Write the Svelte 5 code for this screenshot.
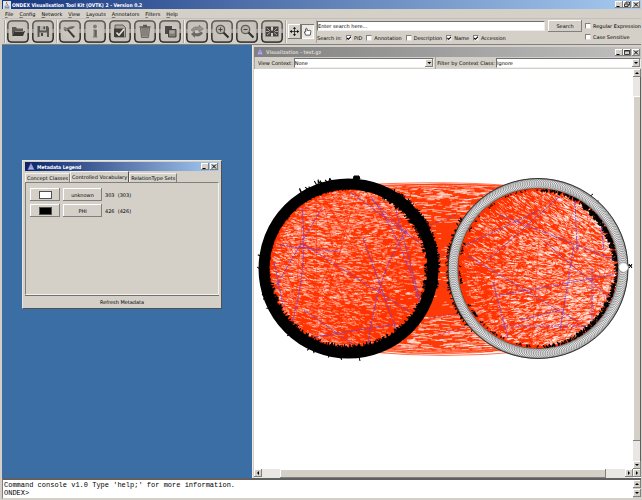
<script>
  const menus = ['File', 'Config', 'Network', 'View', 'Layouts', 'Annotators', 'Filters', 'Help'];
  const toolGroups = [
    ['Open', 'Save'],
    ['Tools', 'Info', 'Check', 'Delete', 'Copy'],
    ['Refresh', 'Zoom in', 'Zoom out', 'Fit']
  ];
  const fields = [
    { label: 'PID', on: true },
    { label: 'Annotation', on: false },
    { label: 'Description', on: false },
    { label: 'Name', on: true },
    { label: 'Accession', on: true }
  ];
  const tabs = ['Concept Classes', 'Controlled Vocabulary', 'RelationType Sets'];
  const vocabulary = [
    { name: 'unknown', count: '303  (303)', color: '#fff' },
    { name: 'PHI', count: '426  (426)', color: '#000' }
  ];

  // Small seeded generator, so the network looks the same on every load.
  let seed = 20071;
  const rnd = () => {
    seed = (seed * 16807) % 2147483647;
    return seed / 2147483647;
  };
  const f = (n) => n.toFixed(1);
  const A = { x: 348.5, y: 268.5 };
  const B = { x: 538, y: 268.5 };
  const polar = (c, r, deg) => [c.x + r * Math.cos((deg * Math.PI) / 180), c.y + r * Math.sin((deg * Math.PI) / 180)];

  function streaks(c, n, tilt, density) {
    let d = '';
    for (let i = 0; i < n; i++) {
      const r = 78 * Math.sqrt(rnd());
      const [x, y] = polar(c, r, rnd() * 360);
      if (rnd() > density((x - c.x) / 80, (y - c.y) / 80)) continue;
      const len = 1.5 + rnd() * 5;
      const a = tilt((x - c.x) / 80, (y - c.y) / 80) + (rnd() - 0.5) * 0.5;
      d += `M${f(x)} ${f(y)}l${f(len * Math.cos(a))} ${f(len * Math.sin(a))}`;
    }
    return d;
  }
  function chords(c, n) {
    let d = '';
    for (let i = 0; i < n; i++) {
      const [x1, y1] = polar(c, 80, rnd() * 360);
      const [x2, y2] = polar(c, 80, rnd() * 360);
      d += `M${f(x1)} ${f(y1)}L${f(x2)} ${f(y2)}`;
    }
    return d;
  }
  function bandStreaks() {
    let d = '';
    for (let i = 0; i < 1100; i++) {
      const edge = rnd() < 0.6;
      const v = edge ? (1 - Math.pow(rnd(), 2) * 0.45) * (rnd() < 0.5 ? -1 : 1) : rnd() * 2 - 1;
      const x = 375 + rnd() * 130;
      const y = 268.5 + v * 84;
      const len = 2 + rnd() * (edge ? 12 : 5);
      d += `M${f(x)} ${f(y)}l${f(len)} ${f((rnd() - 0.5) * len * 0.25)}`;
    }
    return d;
  }
  function arcs() {
    let d = '';
    for (let i = 0; i < 12; i++) {
      const s = i % 2 ? 1 : -1;
      const y = 268.5 + s * (76 + rnd() * 11);
      const e = 268.5 + s * (84 + rnd() * 8);
      d += `M${f(350 + rnd() * 30)} ${f(y)}Q443 ${f(e)} ${f(505 + rnd() * 25)} ${f(y)}`;
    }
    return d;
  }
  function spikes(c, r, from, to, n, size) {
    let d = '';
    for (let i = 0; i < n; i++) {
      const a = from + rnd() * (to - from);
      const s = size * (0.4 + rnd());
      const [x1, y1] = polar(c, r, a);
      const [x2, y2] = polar(c, r + s, a + (rnd() - 0.5) * 3);
      d += `M${f(x1)} ${f(y1)}L${f(x2)} ${f(y2)}`;
    }
    return d;
  }

  const orange = chords(A, 60) + chords(B, 70);
  const whiteLeft = streaks(A, 4200, (x, y) => 0.1 + y * 0.1 - x * 0.1, (x, y) => 0.72 - x * 0.4 - y * 0.35);
  const whiteRight = streaks(B, 6000, (x, y) => 0.15 - y * 0.5, (x, y) => 0.7 + x * 0.45);
  const whiteBand = bandStreaks();
  const outerArcs = arcs();
  const blue =
    'M302 208Q308 270 292 322M350 192L424 246M371 197Q403 238 420 306M396 210L420 300M407 230Q378 270 368 344M363 238L397 332M303 244L410 312M276 286L322 208M314 337L396 324M304 310L358 348M274 262L283 305M372 200L408 234M280 245L340 252' +
    'M500 215L620 262M468 256L578 322M493 282L508 338M500 326H590M592 268V322M500 295L618 274M575 200L577 250M560 330L574 245M488 260L560 196M598 200L604 250M520 320L560 310M466 245L540 210M545 242L612 300';
  const blueBand = 'M428 250L456 260M425 276L450 290M428 318L466 312M438 335L470 325M430 225L456 215';
  const leftFringe =
    spikes(A, 80, -65, 170, 300, -3.2) + spikes(A, 80, 170, 295, 70, -1.5) + spikes(A, 89, -60, 12, 90, 2.6) +
    spikes(A, 89, -124, -100, 12, 4) + spikes(A, 89, 60, 200, 10, 2);
  const rightFringe =
    spikes(B, 80, -85, 85, 260, -3) + spikes(B, 79, -55, -5, 130, -3.6) + spikes(B, 79, 10, 60, 120, -3.4) +
    spikes(B, 79, 85, 275, 70, -2) + spikes(B, 90, 135, 215, 60, 2.4);
  const ringNodes = Array.from({ length: 303 }, (_, i) => polar(B, 85, (i * 360) / 303));
</script>

{#snippet logo()}
  <svg class="logo" viewBox="0 0 8 8" aria-hidden="true">
    <path d="M4 .5 1 6.5h6z" fill="#cdc8f5" stroke="#8a82cc" stroke-width=".7" /><path d="M4 1v6M1 6.5l3-3 3 3" stroke="#6a61b0" stroke-width=".5" fill="none" />
  </svg>
{/snippet}

{#snippet winButtons(kinds)}
  <span class="winbtns">
    {#each kinds as k}
      <button class="wb" aria-label={k}>
        <svg viewBox="0 0 8 7" fill="none" stroke="#000">
          {#if k === 'Minimize'}<path d="M1.5 5.5h3" />
          {:else if k === 'Maximize'}<path d="M1.5 1.5h5v4h-5zM1.5 2h5" stroke-width=".7" />
          {:else if k === 'Restore'}<path d="M3 2.5v-1.500h3.500v3H5M1.500 3h3.500v2.500h-3.500z" stroke-width=".7" />
          {:else}<path d="M2 1.500l4 4M6 1.500l-4 4" />{/if}
        </svg>
      </button>
    {/each}
  </span>
{/snippet}

{#snippet arrow(dir)}
  <button class="sb" aria-label={'Scroll ' + dir}>
    <svg viewBox="0 0 6 6"><path d={{ up: 'M1 4h4L3 2z', down: 'M1 2h4L3 4z', left: 'M4 1v4L2 3z', right: 'M2 1v4l2-2z' }[dir]} /></svg>
  </button>
{/snippet}

{#snippet toolIcon(name)}
  <svg viewBox="0 0 22 23" aria-hidden="true">
    <g fill="none" stroke-width="1.3">
      <rect x=".8" y=".8" width="20.400" height="21.200" rx="4.500" stroke="#8d8a84" />
      <path d="M.8 9V5Q.8.8 5 .8h12q4.200 0 4.200 4.200v4" stroke="#5c5a56" />
      <path d="M.8 13v5q0 4.200 4.200 4.200h12q4.200 0 4.200-4.200v-5" stroke="#2b2a28" />
    </g>
    {#if name === 'Open'}
      <path d="M5 15V7h4l1 1.500h6V11H8z" fill="#5d5c58" /><path d="M5 16l2.500-5H18l-2 5z" fill="#383735" /><path d="M8 11.500h9" stroke="#888" />
    {:else if name === 'Save'}
      <path d="M5.500 6h10l1.500 1.500V17H5.500z" fill="#5a5855" /><path d="M8 6h6v4.500H8z" fill="#b0aea9" /><path d="M7.500 12.500h7.500V17H7.500z" fill="#c2bfb9" /><path d="M9 13h2v3H9z" fill="#444" /><path d="M11.500 6.500h1.500V9h-1.500z" fill="#444" />
    {:else if name === 'Tools'}
      <path d="M5 10q-1-3 1-3l2 1 4-2 4 .5-2 2-4 1 6.500 7-1.800 1.500L8 10.500l-1.500 1z" fill="#6b6965" /><path d="M9 10l6 7" stroke="#383634" stroke-width="1.200" /><path d="M5 8l3 1.500M9 7l4-1" stroke="#a9a7a2" stroke-width=".8" />
    {:else if name === 'Info'}
      <circle cx="11" cy="6.500" r="1.900" fill="#7d7b77" /><path d="M9 9.500h3.500V16l1.500 1.500H8.500L9.500 16v-5z" fill="#7d7b77" /><path d="M12 10v6.500" stroke="#444" />
    {:else if name === 'Check'}
      <path d="M6 5h8l2.500 2.500V17H6z" fill="#aaa79f" stroke="#65635f" /><path d="M5 8.500h10V17H5z" fill="#3f3e3a" /><path d="M7.500 12.500l2.500 2.500 5-6" stroke="#e4e1da" stroke-width="1.600" fill="none" />
    {:else if name === 'Delete'}
      <path d="M6.500 8h9l-1 9.500h-7z" fill="#9a9791" stroke="#6a6763" /><path d="M5.500 7h11M9 5.500h4" stroke="#5b5956" stroke-width="1.300" /><path d="M9 9v7M11 9v7M13 9v7" stroke="#5f5d59" stroke-width=".7" />
    {:else if name === 'Copy'}
      <path d="M6 6h7v8H6z" fill="#4c4a48" /><path d="M9.500 9.500H17V17H9.500z" fill="#827f7a" stroke="#44423f" /><path d="M10.500 10.500h5v3h-5z" fill="#aaa7a1" />
    {:else if name === 'Refresh'}
      <path d="M5 10q3-4.500 8-3V5l4.500 4-4.500 3v-2q-4-1-6 1.500z" fill="#96938e" stroke="#6f6c68" stroke-width=".5" /><path d="M17 13q-3 4.500-8 3v2l-4-4 4-3v2q4 1 6-1.500z" fill="#6b6965" />
    {:else if name === 'Fit'}
      <path d="M4.500 6.500h13v10h-13z" fill="#454341" /><path d="M10 6.500h2v4h-2zM10 13h2v3.500h-2z" fill="#cfcbc3" /><path d="M6 8l3 3M16 8l-3 3M6 15l3-2.500M16 15l-3-2.500M5 11.500h3M14 11.500h3" stroke="#bdb9b1" stroke-width=".8" />
    {:else}
      <circle cx="9.500" cy="9.500" r="4.200" fill="#b4b1ab" stroke="#5f5d59" stroke-width="1.300" /><path d="M12.500 12.500l5 5" stroke="#33312f" stroke-width="2.200" /><path d="M7.500 9.500h4" stroke="#444" /><path d={name === 'Zoom in' ? 'M9.500 7.500v4' : ''} stroke="#444" />
    {/if}
  </svg>
{/snippet}

<div class="app">
  <header class="title main">
    <svg class="logo" viewBox="0 0 8 8" aria-hidden="true"><rect width="8" height="8" fill="#dfe5ef" /><path d="M4 .8Q2.500 2 4 3T3.800 4.500" stroke="#d6672b" fill="none" /><path d="M2 5h4v1.500H2zM1.500 7.200h5" stroke="#4c6e96" stroke-width=".6" fill="none" /></svg>
    <span class="name">ONDEX Visualisation Tool Kit (OVTK) 2 - Version 0.2</span>
    {@render winButtons(['Minimize', 'Restore', 'Close'])}
  </header>

  <nav class="menu">
    {#each menus as m}<button><u>{m[0]}</u>{m.slice(1)}</button>{/each}
  </nav>

  <div class="toolbar">
    {#each toolGroups as group}
      <div class="group">
        {#each group as t}<button class="tool" aria-label={t}>{@render toolIcon(t)}</button>{/each}
      </div>
    {/each}
    <div class="group modes">
      <button class="mode" aria-label="Move"><svg viewBox="0 0 12 12"><path d="M6 2v8M2 6h8" stroke="#222" stroke-width=".9" /><path d="M6 1l1.800 2H4.200zM6 11L4.200 9h3.600zM1 6l2-1.800v3.600zM11 6L9 7.800V4.200z" /></svg></button>
      <button class="mode pressed" aria-label="Pick"><svg viewBox="0 0 12 12"><path d="M4 10L2.500 6.500q.5-1 1.500 0V3q.8-1 1.500 0v2q.8-1 1.500 0 .8-.8 1.500 0 1-.5 1.200.8L9 10z" fill="#fff" stroke="#222" stroke-width=".8" /></svg></button>
    </div>
    <div class="search">
      <div class="left">
        <div class="line">
          <input class="query" type="text" aria-label="Search" value="Enter search here..." />
          <button class="raised go">Search</button>
        </div>
        <div class="line checks">
          <span>Search in:</span>
          {#each fields as c}<label><input type="checkbox" checked={c.on} />{c.label}</label>{/each}
        </div>
      </div>
      <div class="opts">
        <label><input type="checkbox" />Regular Expression</label>
        <label><input type="checkbox" />Case Sensitive</label>
      </div>
    </div>
  </div>

  <main class="desktop">
    <section class="legend">
      <header class="title">
        {@render logo()}<span class="name">Metadata Legend</span>
        {@render winButtons(['Minimize', 'Close'])}
      </header>
      <div class="tabs" role="tablist">
        {#each tabs as t, i}<button role="tab" aria-selected={i === 1} class:active={i === 1}>{t}</button>{/each}
      </div>
      <div class="panel">
        {#each vocabulary as v}
          <div class="entry">
            <button class="raised swatch" aria-label={'Colour of ' + v.name}><i style:background={v.color}></i></button>
            <button class="raised term">{v.name}</button>
            <span class="count">{v.count}</span>
          </div>
        {/each}
      </div>
      <button class="refresh">Refresh Metadata</button>
    </section>

    <section class="vis">
      <header class="title inactive">
        {@render logo()}<span class="name">Visualization - test.gz</span>
        {@render winButtons(['Minimize', 'Maximize', 'Close'])}
      </header>
      <div class="filters">
        <div><label for="ctx">View Context:</label><span class="combo"><select id="ctx"><option>None</option></select><i></i></span></div>
        <div><label for="cls">Filter by Context Class:</label><span class="combo"><select id="cls"><option>Ignore</option></select><i></i></span></div>
      </div>
      <div class="view">
        <svg class="graph" viewBox="254 69 379 400" role="img" aria-label="Network graph">
          <path d="M348 185Q443 183 538 187V350Q443 356 348 352z" fill="#ff3905" />
          <path d={whiteBand} stroke="#fff" stroke-width=".7" stroke-opacity=".8" />
          <path d={outerArcs} stroke="#ff3a08" stroke-width=".7" fill="none" />
          <path d={blueBand} stroke="#8a35a8" stroke-width=".7" stroke-dasharray="3 2" />
          <circle cx={A.x} cy={A.y} r="82" fill="#ff3300" />
          <circle cx={B.x} cy={B.y} r="82" fill="#ff3300" />
          <path d={whiteLeft} stroke="#fff" stroke-width=".65" stroke-opacity=".7" />
          <path d={whiteRight} stroke="#fff" stroke-width=".7" stroke-opacity=".8" />
          <path d={orange} stroke="#ff3300" stroke-width=".6" />
          <path d={blue} stroke="#6c3fe0" stroke-width=".8" stroke-dasharray="5 1 2 1" fill="none" />
          <circle cx={A.x} cy={A.y} r="84.500" fill="none" stroke="#000" stroke-width="11" />
          <path d={leftFringe + rightFringe} stroke="#000" stroke-width="1.100" />
          <path d="M353 180l1-4h5l1 3zM269 226l3 2M257 267l3 2M359 357l1 4M589 197l4-3M628 265l4 1M629 264l3 4M629 268l3-4" stroke="#000" />
          <g fill="#f0f0f0" stroke="#222" stroke-width=".45">
            {#each ringNodes as [x, y]}<circle cx={x} cy={y} r="4.800" />{/each}
          </g>
          <circle cx={B.x} cy={B.y} r="90" fill="none" stroke="#222" stroke-width=".8" />
          <circle cx="623.500" cy="267.500" r="4.700" fill="#fff" stroke="#444" stroke-width=".3" />
        </svg>
        <div class="scroll v">{@render arrow('up')}<div class="track"><div class="thumb"></div></div>{@render arrow('down')}</div>
        <div class="scroll h">{@render arrow('left')}<div class="track"><div class="thumb"></div></div>{@render arrow('right')}</div>
        {@render arrow('right')}
      </div>
    </section>
  </main>

  <footer class="console">
    <pre>Command console v1.0 Type 'help;' for more information.
ONDEX&gt;</pre>
    <div class="spin">{@render arrow('up')}{@render arrow('down')}</div>
  </footer>
</div>

<style>
  :global(body) { background: #d4d0c8; }
  .app {
    display: grid;
    grid-template-rows: 10px 9px 26px 1fr 21px;
    height: 100vh;
    box-sizing: border-box;
    padding: 0 1px 1px 2px;
    background: #d4d0c8;
    color: #000;
    font: 5px/8px "DejaVu Sans", sans-serif;
    overflow: hidden;
  }
  .app :is(button, input, select) { font: inherit; color: inherit; margin: 0; padding: 0; border: 0; border-radius: 0; background: none; box-sizing: border-box; }
  svg { display: block; }

  .title {
    display: flex;
    align-items: center;
    gap: 2px;
    height: 9px;
    padding: 0 1px 0 2px;
    background: linear-gradient(90deg, #0a246a, #a6caf0);
    color: #fff;
  }
  .title.main { background: linear-gradient(90deg, #17377f, #a6caf0); padding-left: 1px; gap: 1px; }
  .title.inactive { background: linear-gradient(90deg, #808080, #c0c0c0); color: #d4d0c8; }
  .name { flex: 1; white-space: nowrap; font-family: "DejaVu Sans Condensed", "DejaVu Sans", sans-serif; font-weight: bold; }
  .logo { width: 8px; height: 8px; flex: none; }
  .winbtns { display: flex; }
  .wb:last-child { margin-left: 1px; }
  .app .wb { width: 8px; height: 7px; background: #d4d0c8; box-shadow: inset -1px -1px #808080, inset 1px 1px #fff; }
  .wb svg { width: 8px; height: 7px; }

  .menu { display: flex; gap: 6px; padding-left: 3px; border-bottom: 1px solid #c4c0b8; }
  .menu u { text-decoration-thickness: 1px; text-decoration-color: #777; }

  .toolbar { display: flex; align-items: stretch; padding: 1px 0 1px 2px; border-bottom: 1px solid #808080; box-sizing: border-box; }
  .group { display: flex; align-items: center; gap: 3px; padding: 0 2px; border-left: 1px solid #aaa69e; box-shadow: inset 1px 0 #efede8; }
  .app .tool { width: 22px; height: 23px; background: radial-gradient(#cecac2, #c0bcb4); border-radius: 6px; }
  .tool svg { width: 22px; height: 23px; }
  .modes { gap: 0; }
  .app .mode { width: 13px; height: 15px; background: #d4d0c8; box-shadow: inset -1px -1px #777, inset 1px 1px #fff; }
  .app .mode.pressed { background: #ece9e4; box-shadow: inset 1px 1px #777, inset -1px -1px #fff; }
  .mode svg { width: 11px; height: 11px; margin: 0 auto; }
  .search { flex: 1; display: flex; gap: 3px; border-left: 1px solid #aaa69e; }
  .search .left { flex: 1; display: flex; flex-direction: column; gap: 1px; }
  .line { display: flex; align-items: center; gap: 3px; height: 12px; }
  .app .query { flex: 1; min-width: 0; height: 10px; background: #fff; border: 1px solid #707070; border-right-color: #eee; border-bottom-color: #eee; }
  .raised { box-shadow: inset -1px -1px #808080, inset 1px 1px #fff; }
  .go { width: 34px; height: 12px; }
  .checks { gap: 4px; }
  .search .checks { height: 10px; }
  .search label { display: flex; align-items: center; gap: 2px; white-space: nowrap; }
  .opts { width: 56px; display: flex; flex-direction: column; gap: 3px; padding-top: 2px; }
  .app input[type='checkbox'] { appearance: none; display: grid; place-items: center; width: 6px; height: 6px; background: #fff; border: 1px solid #808080; border-right-color: #e4e0d8; border-bottom-color: #e4e0d8; }
  .app input[type='checkbox']:checked::before { content: ''; width: 4px; height: 4px; background: #000; clip-path: polygon(0 40%, 35% 65%, 100% 0, 100% 40%, 35% 100%, 0 75%); }

  .desktop { position: relative; background: #3a6ea5; overflow: hidden; }
  .legend {
    position: absolute;
    left: 20px;
    top: 115px;
    width: 200px;
    height: 149px;
    box-sizing: border-box;
    padding: 1px 2px;
    display: flex;
    flex-direction: column;
    background: #d4d0c8;
    border: 1px solid #e8e5df;
    border-right-color: #505050;
    border-bottom-color: #505050;
  }
  .tabs { display: flex; align-items: flex-end; height: 11px; flex: none; }
  .app .tabs button { height: 9px; padding: 0 1px; white-space: nowrap; border: 1px solid #f4f2ee; border-right-color: #808080; border-bottom: 0; line-height: 7px; }
  .app .tabs .active { height: 11px; border-right-color: #505050; }
  .panel { flex: 1; display: flex; flex-direction: column; gap: 3px; padding: 5px 4px; border: 1px solid #808080; border-right-color: #f4f2ee; border-bottom-color: #f4f2ee; }
  .entry { display: flex; align-items: center; gap: 3px; }
  .swatch { width: 30px; height: 13px; display: grid; place-items: center; }
  .swatch i { width: 13px; height: 8px; box-sizing: border-box; border: 1px solid #505050; }
  .term { width: 39px; height: 13px; }
  .count { white-space: pre; }
  .app .refresh { flex: none; height: 12px; border-top: 1px solid #707070; }

  .vis { position: absolute; left: 250px; right: 0; top: 0; bottom: 0; display: flex; flex-direction: column; padding: 2px 0 0 1px; background: #d4d0c8; border-left: 1px solid #eceae6; }
  .vis .title { flex: none; height: 10px; }
  .filters { display: flex; height: 12px; flex: none; gap: 1px; }
  .filters div { display: flex; align-items: center; gap: 1px; flex: 180 1 0; padding-left: 3px; border-left: 1px solid #aaa69e; white-space: nowrap; }
  .filters div + div { flex-grow: 208; padding-left: 1px; }
  .combo { flex: 1; position: relative; display: flex; height: 10px; background: #fff; border: 1px solid #707070; border-right-color: #eee; border-bottom-color: #eee; box-sizing: border-box; }
  .app select { appearance: none; width: 100%; height: 8px; }
  .combo i { position: absolute; right: 0; top: 0; bottom: 0; width: 8px; display: grid; place-items: center; background: #d4d0c8; box-shadow: inset -1px -1px #808080, inset 1px 1px #fff; pointer-events: none; }
  .combo i::before { content: ''; width: 4px; height: 2px; background: #000; clip-path: polygon(0 0, 100% 0, 50% 100%); }

  .view { flex: 1; min-height: 0; display: grid; grid-template: minmax(0, 1fr) 9px / minmax(0, 1fr) 8px; background: #fff; }
  .graph { width: 100%; height: 100%; }
  .scroll { display: flex; background: #e9e7e3; }
  .scroll.v { flex-direction: column; border-right: 1px solid #606060; }
  .track { flex: 1; display: flex; }
  .v .track { flex-direction: column; padding: 19px 0 20px; }
  .h .track { padding: 0 19px 0 18px; }
  .thumb { flex: 1; background: #d4d0c8; box-shadow: inset -1px -1px #808080, inset 1px 1px #fff; }
  .v .thumb { box-shadow: inset 0 -1px #808080, inset 1px 1px #fff; }
  .app .sb { width: 8px; height: 8px; flex: none; display: grid; place-items: center; background: #d4d0c8; box-shadow: inset -1px -1px #808080, inset 1px 1px #fff; }
  .sb svg { width: 6px; height: 6px; }

  .console { display: flex; justify-content: space-between; border-top: 2px solid #606060; border-left: 1px solid #808080; background: #fff; border-bottom: 1px solid #d4d0c8; box-sizing: border-box; }
  .console pre { margin: 0; padding: 1px; font: 7px/8px "Liberation Mono", monospace; }
  .spin { display: flex; flex-direction: column; gap: 1px; background: #d4d0c8; }
</style>
